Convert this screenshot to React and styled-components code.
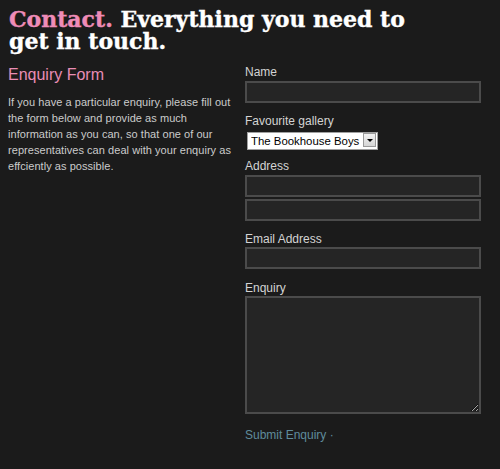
import React from "react";
import styled, { createGlobalStyle } from "styled-components";

const GlobalStyle = createGlobalStyle`
    html, body {
        margin: 0;
        padding: 0;
        background-color: #1b1b1b;
    }
    body {
        font-family: "Liberation Sans", Arial, sans-serif;
    }
`;

const Page = styled.div`
    width: 500px;
    height: 469px;
    padding: 8px 19px 0 8px;
    box-sizing: border-box;
    background-color: #1b1b1b;
    overflow: hidden;
`;

const Title = styled.h1`
    margin: 0 0 0 1px;
    max-width: 430px;
    font-family: "DejaVu Serif", serif;
    font-weight: 700;
    font-size: 22px;
    line-height: 22px;
    color: #ffffff;
    -webkit-text-stroke: 0.4px currentColor;
`;

const Pink = styled.span`
    color: #ef8cb8;
`;

const Columns = styled.div`
    display: grid;
    grid-template-columns: 237px 236px;
    margin-top: 14px;
`;

const Intro = styled.div``;

const SubHeading = styled.h2`
    margin: 0;
    font-weight: 400;
    font-size: 16px;
    line-height: 18px;
    color: #e98db5;
`;

const IntroText = styled.p`
    margin: 10px 0 0;
    font-size: 11px;
    line-height: 16px;
    letter-spacing: 0.05px;
    color: #cbcbcb;
    width: 230px;
`;

const Form = styled.form`
    display: flex;
    flex-direction: column;
`;

const Field = styled.div`
    display: flex;
    flex-direction: column;
    gap: ${(p) => p.$gap ?? 2}px;
    margin-bottom: ${(p) => p.$spacing ?? 12}px;
`;

const Label = styled.label`
    font-size: 12px;
    line-height: 13px;
    color: #d4d4d4;
`;

const TextInput = styled.input`
    display: block;
    box-sizing: border-box;
    width: 236px;
    height: 22px;
    margin: 0;
    background-color: #252525;
    border: 2px solid #4b4b4b;
    color: #ddd;
    font-size: 12px;
    outline: none;
`;

const SelectWrap = styled.div`
    position: relative;
    width: 131px;
    height: 18px;
    margin-left: 2px;
`;

const Select = styled.select`
    appearance: none;
    -webkit-appearance: none;
    box-sizing: border-box;
    width: 100%;
    height: 100%;
    margin: 0;
    padding: 0 16px 0 3px;
    background-color: #ffffff;
    border: 1px solid #a0a0a0;
    border-radius: 0;
    font-family: "Liberation Sans", Arial, sans-serif;
    font-size: 11.4px;
    color: #000;
    outline: none;
`;

const ArrowBox = styled.span`
    position: absolute;
    top: 2px;
    right: 2px;
    width: 13px;
    height: 14px;
    box-sizing: border-box;
    background: linear-gradient(#f2f2f2, #d6d6d6);
    border: 1px solid #9a9a9a;
    pointer-events: none;
    display: flex;
    align-items: center;
    justify-content: center;

    &::after {
        content: "";
        border-left: 3px solid transparent;
        border-right: 3px solid transparent;
        border-top: 3px solid #000;
    }
`;

const TextArea = styled.textarea`
    display: block;
    box-sizing: border-box;
    width: 236px;
    height: 118px;
    margin: 0;
    background-color: #252525;
    border: 2px solid #4b4b4b;
    color: #ddd;
    resize: vertical;
    outline: none;
`;

const SubmitLink = styled.a`
    display: block;
    margin-top: 14px;
    font-size: 12px;
    line-height: 14px;
    color: #5f8c9c;
    text-decoration: none;
    cursor: pointer;
`;

export default function App() {
    return (
        <Page>
            <GlobalStyle />
            <Title>
                <Pink>Contact.</Pink> Everything you need to get in touch.
            </Title>
            <Columns>
                <Intro>
                    <SubHeading>Enquiry Form</SubHeading>
                    <IntroText>
                        If you have a particular enquiry, please fill out the form below and
                        provide as much information as you can, so that one of our
                        representatives can deal with your enquiry as effciently as possible.
                    </IntroText>
                </Intro>
                <Form onSubmit={(e) => e.preventDefault()}>
                    <Field>
                        <Label>Name</Label>
                        <TextInput type="text" />
                    </Field>
                    <Field $gap={3} $spacing={11}>
                        <Label>Favourite gallery</Label>
                        <SelectWrap>
                            <Select defaultValue="bookhouse">
                                <option value="bookhouse">The Bookhouse Boys</option>
                            </Select>
                            <ArrowBox />
                        </SelectWrap>
                    </Field>
                    <Field>
                        <Label>Address</Label>
                        <TextInput type="text" />
                        <TextInput type="text" />
                    </Field>
                    <Field $gap={1} $spacing={13}>
                        <Label>Email Address</Label>
                        <TextInput type="email" />
                    </Field>
                    <Field $gap={1} $spacing={0}>
                        <Label>Enquiry</Label>
                        <TextArea />
                    </Field>
                    <SubmitLink>Submit Enquiry ·</SubmitLink>
                </Form>
            </Columns>
        </Page>
    );
}
